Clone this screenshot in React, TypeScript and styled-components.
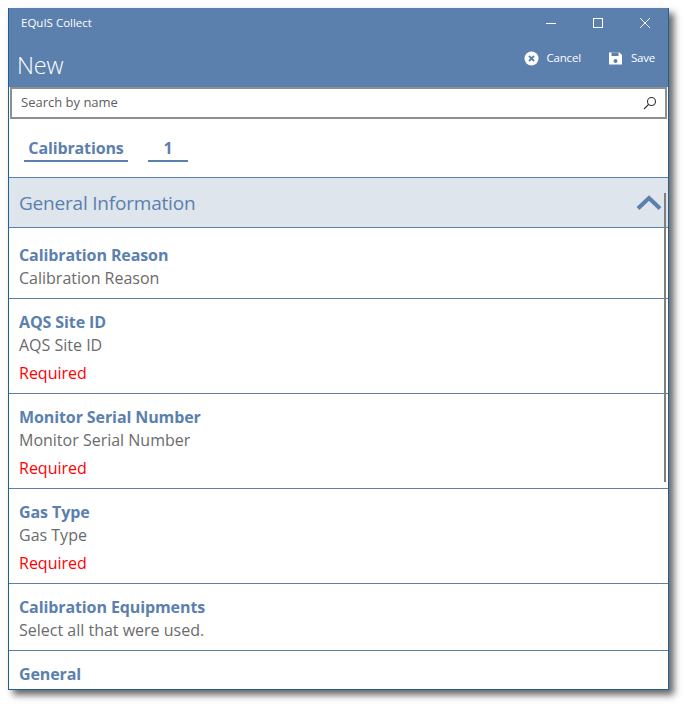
import React from "react";
import styled, { createGlobalStyle } from "styled-components";

const Global = createGlobalStyle`
  html, body { margin: 0; padding: 0; background: #fff; width: 685px; height: 706px; overflow: hidden; }
  * { box-sizing: border-box; }
`;
const Page = styled.div`
  padding: 8px 0 0 8px;
  font-family: "Open Sans", "Noto Sans", sans-serif;
`;
const Win = styled.div`
  position: relative;
  width: 661px;
  height: 682px;
  background: #fff;
  border: 1px solid #1f6098;
  border-top: 0;
  box-shadow: 5px 5px 7px rgba(0, 0, 0, 0.6);
  display: flex;
  flex-direction: column;
`;
const Clip = styled.div`
  flex: 1;
  overflow: hidden;
  display: flex;
  flex-direction: column;
`;
const Header = styled.header`
  height: 79px;
  background: #5b80ae;
  color: #fff;
  display: flex;
  flex-direction: column;
  flex-shrink: 0;
`;
const TitleRow = styled.div`
  height: 30px;
  display: flex;
  align-items: center;
  justify-content: space-between;
`;
const AppName = styled.span`
  font-size: 11.5px;
  margin: -2px 0 0 12px;
`;
const WinBtns = styled.div`
  display: flex;
  align-items: center;
  gap: 27px;
  margin-right: 13px;
`;
const WinBtn = styled.svg`
  width: 20px;
  height: 12px;
  display: block;
  fill: none;
  stroke: #fff;
  stroke-width: 1;
`;
const CommandRow = styled.div`
  flex: 1;
  display: flex;
  justify-content: space-between;
  align-items: flex-start;
`;
const PageTitle = styled.h1`
  margin: 12px 0 0 8px;
  font-size: 23.5px;
  line-height: 30px;
  font-weight: 300;
  letter-spacing: -0.2px;
`;
const Commands = styled.div`
  display: flex;
  gap: 27px;
  margin: 0 13px 0 0;
  padding-top: 10px;
`;
const Command = styled.div`
  display: flex;
  align-items: center;
  gap: 8px;
  font-size: 11.5px;
  letter-spacing: -0.2px;
  line-height: 20px;
`;
const CmdIcon = styled.svg`
  width: 15px;
  height: 15px;
  display: block;
`;
const Search = styled.div`
  height: 32px;
  flex-shrink: 0;
  margin: 0 1px;
  border: 2px solid #8f8f8f;
  background: #fff;
  display: flex;
  align-items: center;
  justify-content: space-between;
  padding: 0 8px 2px 9px;
  font-size: 13px;
  color: #5e5e5e;
`;
const SearchIcon = styled.svg`
  width: 14px;
  height: 14px;
  margin-top: 2px;
  fill: none;
  stroke: #333;
  stroke-width: 1.1;
`;
const Tabs = styled.div`
  height: 59px;
  flex-shrink: 0;
  display: flex;
  gap: 20px;
  padding: 18px 0 0 15px;
  border-bottom: 1px solid #5b80ae;
`;
const Tab = styled.div<{ $w: number }>`
  width: ${(p) => p.$w}px;
  height: 25px;
  border-bottom: 2px solid #5b80ae;
  color: #5b80ae;
  font-size: 16px;
  line-height: 23px;
  font-weight: 700;
  letter-spacing: -0.13px;
  text-align: center;
`;
const SectionHead = styled.div`
  height: 50px;
  flex-shrink: 0;
  background: #dee5ec;
  border-bottom: 1px solid #5b80ae;
  color: #5b80ae;
  display: flex;
  align-items: center;
  justify-content: space-between;
  padding: 1px 6px 0 10px;
  font-size: 19px;
  letter-spacing: -0.2px;
`;
const Chevron = styled.svg`
  width: 26px;
  height: 16px;
  fill: none;
  stroke: #5b80ae;
  stroke-width: 4;
`;
const Field = styled.div<{ $h: number; $top: number }>`
  height: ${(p) => p.$h}px;
  flex-shrink: 0;
  padding: ${(p) => p.$top}px 0 0 10px;
  border-bottom: 1px solid #5b80ae;
`;
const Label = styled.div`
  color: #5b80ae;
  font-size: 16px;
  line-height: 22px;
  font-weight: 700;
  letter-spacing: -0.1px;
`;
const Hint = styled.div`
  color: #6b6b6b;
  font-size: 16px;
  line-height: 24px;
`;
const Required = styled.div`
  color: #f00;
  font-size: 16px;
  line-height: 24px;
  margin-top: 4px;
`;
const Scrollbar = styled.div`
  position: absolute;
  right: 2px;
  top: 185px;
  width: 2px;
  height: 289px;
  background: #7f7f7f;
`;

const fields = [
  { l: "Calibration Reason", h: "Calibration Reason", r: false, ht: 71, top: 16 },
  { l: "AQS Site ID", h: "AQS Site ID", r: true, ht: 95, top: 12 },
  { l: "Monitor Serial Number", h: "Monitor Serial Number", r: true, ht: 95, top: 12 },
  { l: "Gas Type", h: "Gas Type", r: true, ht: 95, top: 12 },
  { l: "Calibration Equipments", h: "Select all that were used.", r: false, ht: 67, top: 12 },
];

export default function App() {
  return (
    <Page>
      <Global />
      <Win>
        <Clip>
          <Header>
            <TitleRow>
              <AppName>EQuIS Collect</AppName>
              <WinBtns>
                <WinBtn viewBox="0 0 20 12"><path d="M5 6.5h10" /></WinBtn>
                <WinBtn viewBox="0 0 20 12"><rect x="5.5" y="1.5" width="9" height="9" /></WinBtn>
                <WinBtn viewBox="0 0 20 12"><path d="M5 1l10 10M15 1L5 11" /></WinBtn>
              </WinBtns>
            </TitleRow>
            <CommandRow>
              <PageTitle>New</PageTitle>
              <Commands>
                <Command>
                  <CmdIcon viewBox="0 0 15 15">
                    <circle cx="7.5" cy="7.5" r="7" fill="#fff" />
                    <path d="M5 5l5 5M10 5l-5 5" stroke="#5b80ae" strokeWidth="1.8" fill="none" />
                  </CmdIcon>
                  Cancel
                </Command>
                <Command>
                  <CmdIcon viewBox="0 0 15 15">
                    <path d="M1 1.5h10.5L14 4v9.5H1z" fill="#fff" />
                    <rect x="3.5" y="1.5" width="7" height="3.5" fill="#5b80ae" />
                    <circle cx="7.5" cy="10" r="2" fill="#5b80ae" />
                  </CmdIcon>
                  Save
                </Command>
              </Commands>
            </CommandRow>
          </Header>
          <Search>
            Search by name
            <SearchIcon viewBox="0 0 14 14">
              <circle cx="8.5" cy="5.5" r="4" />
              <path d="M5.5 8.5L1 13" />
            </SearchIcon>
          </Search>
          <Tabs>
            <Tab $w={104}>Calibrations</Tab>
            <Tab $w={40}>1</Tab>
          </Tabs>
          <SectionHead>
            General Information
            <Chevron viewBox="0 0 26 16"><path d="M2 13.5L13 3l11 10.5" /></Chevron>
          </SectionHead>
          {fields.map((f) => (
            <Field key={f.l} $h={f.ht} $top={f.top}>
              <Label>{f.l}</Label>
              <Hint>{f.h}</Hint>
              {f.r && <Required>Required</Required>}
            </Field>
          ))}
          <Field $h={60} $top={12}>
            <Label>General</Label>
          </Field>
        </Clip>
        <Scrollbar />
      </Win>
    </Page>
  );
}
